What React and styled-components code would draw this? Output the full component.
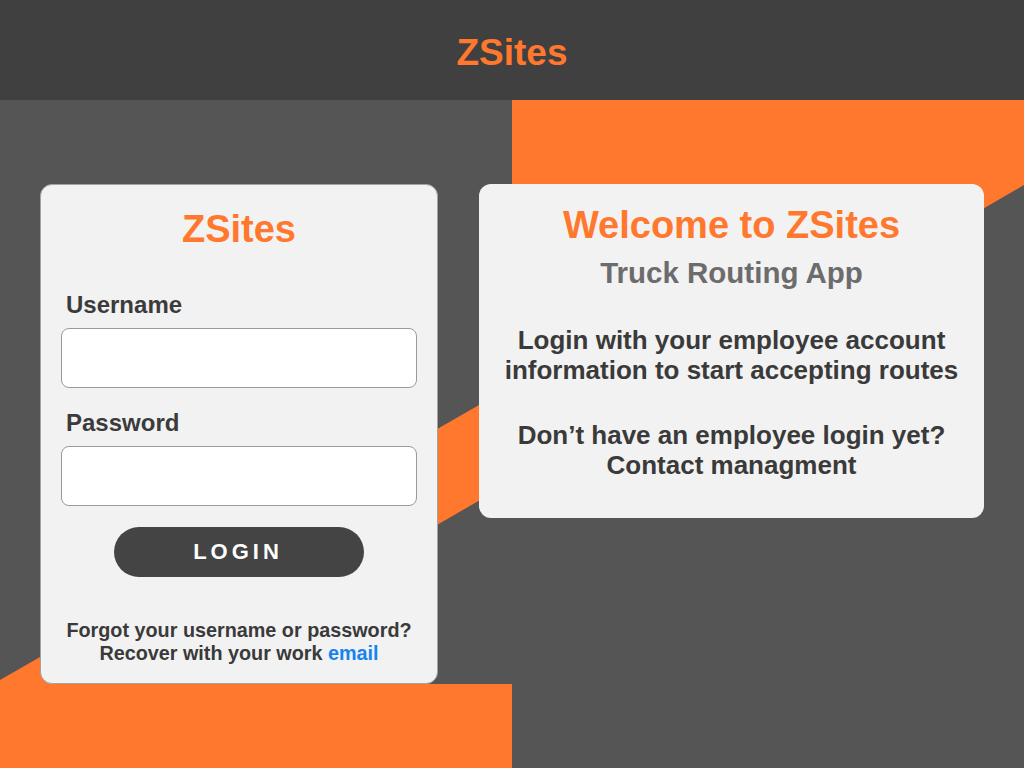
import React from 'react';
import styled, { createGlobalStyle } from 'styled-components';

const GlobalStyle = createGlobalStyle`
  html, body {
    margin: 0;
    padding: 0;
    overflow: hidden;
    background: #555555;
  }
  * {
    box-sizing: border-box;
  }
  body {
    font-family: "Liberation Sans", Arial, Helvetica, sans-serif;
  }
`;

const ORANGE = '#ff782e';

const Page = styled.div`
  width: 1024px;
  height: 768px;
  display: flex;
  flex-direction: column;
`;

const Header = styled.header`
  height: 100px;
  background: #404040;
  display: flex;
  justify-content: center;
  padding-top: 31px;
`;

const Brand = styled.h1`
  margin: 0;
  font-size: ${(p) => p.size || 37}px;
  line-height: 44px;
  font-weight: 700;
  color: ${ORANGE};
  text-align: center;
`;

const Main = styled.main`
  position: relative;
  flex: 1;
  display: flex;
  align-items: flex-start;
  gap: 41px;
  padding: 84px 0 0 40px;
`;

const Backdrop = styled.svg`
  position: absolute;
  inset: 0;
  width: 100%;
  height: 100%;
  z-index: 0;
`;

const Card = styled.section`
  position: relative;
  z-index: 1;
  background: #f2f2f2;
  border-radius: 12px;
`;

const LoginCard = styled(Card)`
  width: 398px;
  height: 500px;
  border: 1px solid #a3a3a3;
  padding: 22px 20px 0;
  display: flex;
  flex-direction: column;
`;

const WelcomeCard = styled(Card)`
  width: 505px;
  height: 334px;
  padding-top: 19px;
  text-align: center;
`;

const Field = styled.div`
  display: flex;
  flex-direction: column;
  margin-top: ${(p) => p.gap}px;
`;

const Label = styled.label`
  font-size: 24px;
  line-height: 28px;
  font-weight: 700;
  color: #3b3b3b;
  margin: 0 0 9px 5px;
`;

const Input = styled.input`
  height: 60px;
  width: 100%;
  background: #ffffff;
  border: 1px solid #9a9a9a;
  border-radius: 8px;
  font-size: 20px;
  padding: 0 12px;
  outline: none;
`;

const LoginButton = styled.button`
  align-self: center;
  margin-top: 21px;
  width: 250px;
  height: 50px;
  border: none;
  border-radius: 25px;
  background: #444444;
  color: #ffffff;
  font-family: inherit;
  font-size: 22px;
  font-weight: 700;
  letter-spacing: 4px;
  padding-left: 4px;
  cursor: pointer;
`;

const Help = styled.p`
  margin: 42px 0 0;
  font-size: 19.8px;
  line-height: 23px;
  font-weight: 700;
  color: #3a3a3a;
  text-align: center;
`;

const Link = styled.a`
  color: #1683f0;
  text-decoration: none;
`;

const Subtitle = styled.h2`
  margin: 9px 0 0;
  font-size: 29.5px;
  line-height: 34px;
  font-weight: 700;
  color: #6c6c6c;
`;

const Paragraph = styled.p`
  margin: 35px 0 0;
  font-size: 26px;
  line-height: 30px;
  font-weight: 700;
  color: #3a3a3a;
`;

export default function App() {
  return (
    <Page>
      <GlobalStyle />
      <Header>
        <Brand>ZSites</Brand>
      </Header>
      <Main>
        <Backdrop viewBox="0 0 1024 668" preserveAspectRatio="none" aria-hidden="true">
          <polygon
            fill={ORANGE}
            points="512,0 1024,0 1024,85 0,678 0,580 512,286"
          />
          <rect x="0" y="584" width="512" height="84" fill={ORANGE} />
        </Backdrop>

        <LoginCard>
          <Brand size={38}>ZSites</Brand>
          <Field gap={40}>
            <Label htmlFor="username">Username</Label>
            <Input id="username" type="text" />
          </Field>
          <Field gap={21}>
            <Label htmlFor="password">Password</Label>
            <Input id="password" type="password" />
          </Field>
          <LoginButton>LOGIN</LoginButton>
          <Help>
            Forgot your username or password?
            <br />
            Recover with your work <Link href="#">email</Link>
          </Help>
        </LoginCard>

        <WelcomeCard>
          <Brand size={38}>Welcome to ZSites</Brand>
          <Subtitle>Truck Routing App</Subtitle>
          <Paragraph>
            Login with your employee account
            <br />
            information to start accepting routes
          </Paragraph>
          <Paragraph>
            Don’t have an employee login yet?
            <br />
            Contact managment
          </Paragraph>
        </WelcomeCard>
      </Main>
    </Page>
  );
}
